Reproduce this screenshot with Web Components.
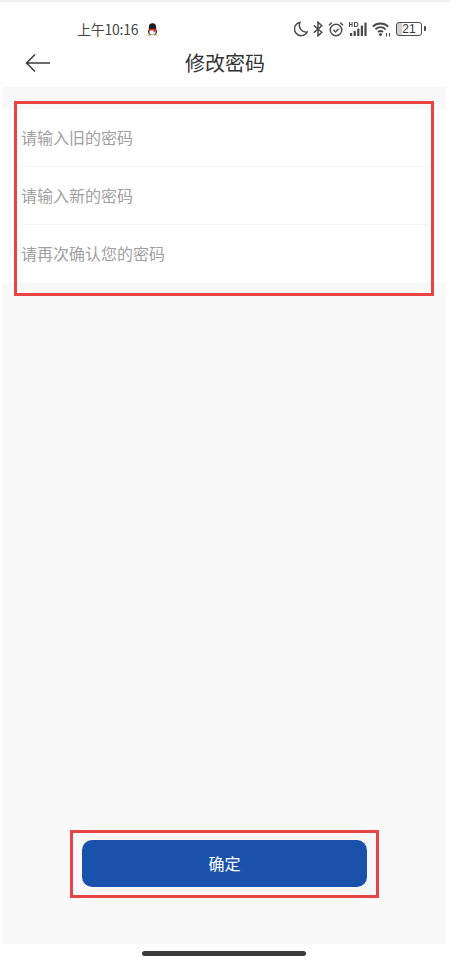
<!DOCTYPE html>
<html lang="zh">
<head>
<meta charset="utf-8">
<title>修改密码</title>
<style>
    html, body { margin: 0; padding: 0; background: #fff; }
    body { font-family: "Noto Sans CJK SC", "Noto Sans", sans-serif; }
</style>
</head>
<body>
<password-screen>
    <status-bar slot="status" time="上午10:16" battery="21"></status-bar>
    <nav-bar slot="nav" heading="修改密码"></nav-bar>
    <password-form slot="form" marked>
        <password-field placeholder="请输入旧的密码"></password-field>
        <password-field placeholder="请输入新的密码"></password-field>
        <password-field placeholder="请再次确认您的密码" last></password-field>
    </password-form>
    <submit-button slot="action" marked>确定</submit-button>
</password-screen>

<script>
class PasswordScreen extends HTMLElement {
    constructor() {
        super();
        this.attachShadow({mode: "open"}).innerHTML = `
<style>
    :host {
        display: flex;
        flex-direction: column;
        width: 450px;
        height: 962px;
        box-sizing: border-box;
        border-top: 2px solid #eeeeee;
        background: #fff;
    }
    #body {
        flex: 1;
        display: flex;
        flex-direction: column;
        margin: 0 4px 0 3px;
        padding-top: 22px;
        background: #f8f8f8;
    }
    #spacer { flex: 1; }
    #foot {
        height: 18px;
        display: flex;
        justify-content: center;
        align-items: center;
    }
    #home {
        width: 164px;
        height: 5px;
        margin-right: 2px;
        border-radius: 3px;
        background: #3b3b3b;
    }
</style>
<slot name="status"></slot>
<slot name="nav"></slot>
<div id="body">
    <slot name="form"></slot>
    <div id="spacer"></div>
    <slot name="action"></slot>
</div>
<div id="foot"><div id="home"></div></div>`;
    }
}

class StatusBar extends HTMLElement {
    constructor() {
        super();
        this.attachShadow({mode: "open"}).innerHTML = `
<style>
    :host {
        display: flex;
        align-items: center;
        height: 42px;
        padding: 12px 25px 0 77px;
        box-sizing: border-box;
        color: #444;
    }
    #time { font-size: 14px; line-height: 20px; letter-spacing: -0.25px; }
    #qq { margin-left: 9px; }
    #icons { margin-left: auto; display: flex; align-items: center; gap: 5px; }
    svg { display: block; }
    #batt {
        position: relative;
        display: flex;
        align-items: center;
        justify-content: center;
        width: 26px;
        height: 14px;
        box-sizing: border-box;
        border: 1.5px solid #4a4a4a;
        border-radius: 3px;
        font: 12px/12px "Liberation Sans", sans-serif;
        color: #333;
        margin-right: 3px;
        background: linear-gradient(90deg, #d0d0d0 0 5px, transparent 5px);
    }
    #batt::after {
        content: "";
        position: absolute;
        right: -4.5px;
        top: 3px;
        width: 2px;
        height: 5px;
        background: #4a4a4a;
        border-radius: 0 1px 1px 0;
    }
</style>
<span id="time"></span>
<svg id="qq" width="11" height="13" viewBox="0 0 11 13">
    <ellipse cx="5.500" cy="4.400" rx="3.700" ry="4.200" fill="#1d1d1d"/>
    <ellipse cx="5.500" cy="8.800" rx="4.400" ry="3.200" fill="#1d1d1d"/>
    <ellipse cx="5.500" cy="9" rx="3.200" ry="2.800" fill="#f4f4f4"/>
    <path d="M1.700 5.800h7.600l.4 1.700-1.700.4v1.300H6.700V7.600H1.300z" fill="#c9302a"/>
    <path d="M2 11l-1.400 1.400 3.400.4zM9 11l1.400 1.400-3.400.4z" fill="#d9a02b"/>
</svg>
<div id="icons">
    <svg width="14" height="16" viewBox="0 0 14 16" fill="none" stroke="#4a4a4a" stroke-width="1.400">
        <path d="M6 1.400A6.700 6.700 0 1 0 13.200 11 6.800 6.800 0 0 1 6 1.400z"/>
    </svg>
    <svg width="10" height="16" viewBox="0 0 10 16" fill="none" stroke="#4a4a4a" stroke-width="1.500">
        <path d="M.8 4.400l8 6.800L5 14.800V1.200l3.800 3.600-8 6.800"/>
    </svg>
    <svg width="16" height="16" viewBox="0 0 16 16" fill="none" stroke="#4a4a4a" stroke-width="1.400">
        <circle cx="8" cy="9" r="5.800"/>
        <path d="M5.400 8.800l2.200 2.200 3-3.200M1 4.200L3.800 1.400M15 4.200L12.200 1.400"/>
    </svg>
    <svg width="18" height="16" viewBox="0 0 18 16" fill="#4a4a4a">
        <rect x="1" y="12" width="2.200" height="3"/>
        <rect x="4.600" y="10" width="2.200" height="5"/>
        <rect x="8.200" y="7.600" width="2.200" height="7.400"/>
        <rect x="11.800" y="4.600" width="2.200" height="10.400"/>
        <rect x="15.400" y="1.600" width="2.200" height="13.400"/>
        <path d="M0 1h1v2h1.600V1h1v5h-1V4H1v2H0zM5 1h2c1.600 0 2.400 1 2.400 2.500S8.600 6 7 6H5zm1 1v3h1c.9 0 1.400-.6 1.400-1.500S7.900 2 7 2z"/>
    </svg>
    <svg width="19" height="16" viewBox="0 0 19 16" fill="none" stroke="#4a4a4a" stroke-width="1.900">
        <path d="M.8 5.600C5 1.400 12 1.400 16.200 5.600"/>
        <path d="M3.400 8.400C6.400 5.600 10.600 5.600 13.600 8.400"/>
        <path d="M6 11C7.600 9.700 9.400 9.700 11 11"/>
        <circle cx="8.500" cy="13.400" r="1.500" fill="#4a4a4a" stroke="none"/>
        <path d="M14.500 15.500v-3.500M17.500 15.500v-3.500" stroke-width="1.100"/>
    </svg>
    <div id="batt"></div>
</div>`;
    }
    connectedCallback() {
        this.shadowRoot.querySelector("#time").textContent = this.getAttribute("time");
        this.shadowRoot.querySelector("#batt").textContent = this.getAttribute("battery");
    }
}

class NavBar extends HTMLElement {
    constructor() {
        super();
        this.attachShadow({mode: "open"}).innerHTML = `
<style>
    :host {
        display: grid;
        grid-template-columns: 1fr auto 1fr;
        align-items: center;
        height: 43px;
        padding-bottom: 6px;
        box-sizing: border-box;
        color: #333;
    }
    svg { display: block; margin-left: 25px; }
    h1 { margin: 0; font-size: 20px; font-weight: 400; line-height: 28px; }
</style>
<svg width="26" height="20" viewBox="0 0 26 20" fill="none" stroke="#3c3c3c" stroke-width="1.600">
    <path d="M1.500 10H25M10 1.500L1.500 10l8.500 8.500"/>
</svg>
<h1></h1>
<span></span>`;
    }
    connectedCallback() {
        this.shadowRoot.querySelector("h1").textContent = this.getAttribute("heading");
    }
}

class PasswordForm extends HTMLElement {
    constructor() {
        super();
        this.attachShadow({mode: "open"}).innerHTML = `
<style>
    :host {
        display: block;
        position: relative;
        background: #fff;
    }
    #mark {
        display: none;
        position: absolute;
        left: 11px;
        right: 12px;
        top: -8px;
        bottom: -13px;
        border: 3px solid #e94343;
        pointer-events: none;
    }
    :host([marked]) #mark { display: block; }
</style>
<slot></slot>
<div id="mark"></div>`;
    }
}

class PasswordField extends HTMLElement {
    constructor() {
        super();
        this.attachShadow({mode: "open"}).innerHTML = `
<style>
    :host {
        display: block;
        padding: 0 19px;
    }
    #row {
        height: 58px;
        box-sizing: border-box;
        display: flex;
        align-items: center;
        padding-bottom: 2px;
        border-bottom: 1px solid #f3f3f3;
    }
    :host([last]) #row { border-bottom: none; }
    input {
        flex: 1;
        min-width: 0;
        border: none;
        outline: none;
        padding: 0;
        margin-left: -1px;
        background: none;
        font: 16px/24px "Noto Sans CJK SC", "Noto Sans", sans-serif;
    }
    input::placeholder { color: #9f9f9f; opacity: 1; }
</style>
<div id="row"><input type="password"></div>`;
    }
    connectedCallback() {
        this.shadowRoot.querySelector("input").placeholder = this.getAttribute("placeholder");
    }
}

class SubmitButton extends HTMLElement {
    constructor() {
        super();
        this.attachShadow({mode: "open"}).innerHTML = `
<style>
    :host {
        display: block;
        position: relative;
        margin: 0 79px 57px 79px;
    }
    button {
        display: block;
        width: 100%;
        height: 47px;
        padding: 0 0 2px;
        border: none;
        border-radius: 10px;
        background: #1a52ab;
        color: #fff;
        font: 16px/22px "Noto Sans CJK SC", "Noto Sans", sans-serif;
    }
    #mark {
        display: none;
        position: absolute;
        inset: -10px -12px -11px -12px;
        border: 3px solid #e94343;
        pointer-events: none;
    }
    :host([marked]) #mark { display: block; }
</style>
<button type="button"><slot></slot></button>
<div id="mark"></div>`;
    }
}

customElements.define("password-screen", PasswordScreen);
customElements.define("status-bar", StatusBar);
customElements.define("nav-bar", NavBar);
customElements.define("password-form", PasswordForm);
customElements.define("password-field", PasswordField);
customElements.define("submit-button", SubmitButton);
</script>
</body>
</html>
